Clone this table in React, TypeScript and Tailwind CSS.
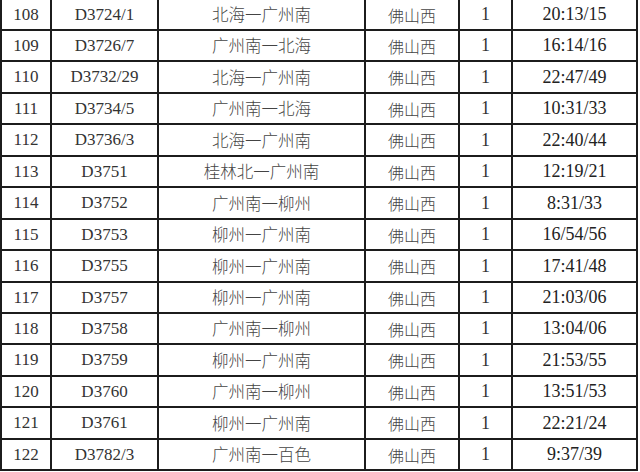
const rows = [
  { no: "108", train: "D3724/1", route: "北海一广州南", time: "20:13/15", h: "h-[31px]" },
  { no: "109", train: "D3726/7", route: "广州南一北海", time: "16:14/16", h: "h-[31px]" },
  { no: "110", train: "D3732/29", route: "北海一广州南", time: "22:47/49", h: "h-[32px]" },
  { no: "111", train: "D3734/5", route: "广州南一北海", time: "10:31/33", h: "h-[31px]" },
  { no: "112", train: "D3736/3", route: "北海一广州南", time: "22:40/44", h: "h-[32px]" },
  { no: "113", train: "D3751", route: "桂林北一广州南", time: "12:19/21", h: "h-[31px]" },
  { no: "114", train: "D3752", route: "广州南一柳州", time: "8:31/33", h: "h-[32px]" },
  { no: "115", train: "D3753", route: "柳州一广州南", time: "16/54/56", h: "h-[31px]" },
  { no: "116", train: "D3755", route: "柳州一广州南", time: "17:41/48", h: "h-[32px]" },
  { no: "117", train: "D3757", route: "柳州一广州南", time: "21:03/06", h: "h-[31px]" },
  { no: "118", train: "D3758", route: "广州南一柳州", time: "13:04/06", h: "h-[31px]" },
  { no: "119", train: "D3759", route: "柳州一广州南", time: "21:53/55", h: "h-[32px]" },
  { no: "120", train: "D3760", route: "广州南一柳州", time: "13:51/53", h: "h-[31px]" },
  { no: "121", train: "D3761", route: "柳州一广州南", time: "22:21/24", h: "h-[32px]" },
  { no: "122", train: "D3782/3", route: "广州南一百色", time: "9:37/39", h: "h-[31px]" },
];

const cell = "flex items-center justify-center border-r-2 border-b-2 border-[#1c1c1c]";
const serif = "font-['Liberation_Serif',serif]";
const cjk = "font-['Noto_Sans_CJK_SC',sans-serif] font-light";

export default function App() {
  return (
    <div className="w-[640px] h-[472px] overflow-hidden bg-white">
      <div className="w-[638px] border-l-2 border-[#1c1c1c]">
        {rows.map((r) => (
          <div
            key={r.no}
            className={`grid grid-cols-[50px_107px_207px_94px_53px_125px] ${r.h}`}
          >
            <div className={`${cell} ${serif} text-[17px] text-[#333]`}>{r.no}</div>
            <div className={`${cell} ${serif} text-[17px] text-[#333]`}>{r.train}</div>
            <div className={`${cell} ${cjk} text-[16.5px] text-[#444] tracking-[0px]`}>{r.route}</div>
            <div className={`${cell} ${cjk} text-[16px] text-[#444]`}>佛山西</div>
            <div className={`${cell} ${serif} text-[18px] text-[#333]`}>1</div>
            <div className={`${cell} ${serif} text-[18px] text-[#222]`}>{r.time}</div>
          </div>
        ))}
      </div>
    </div>
  );
}
